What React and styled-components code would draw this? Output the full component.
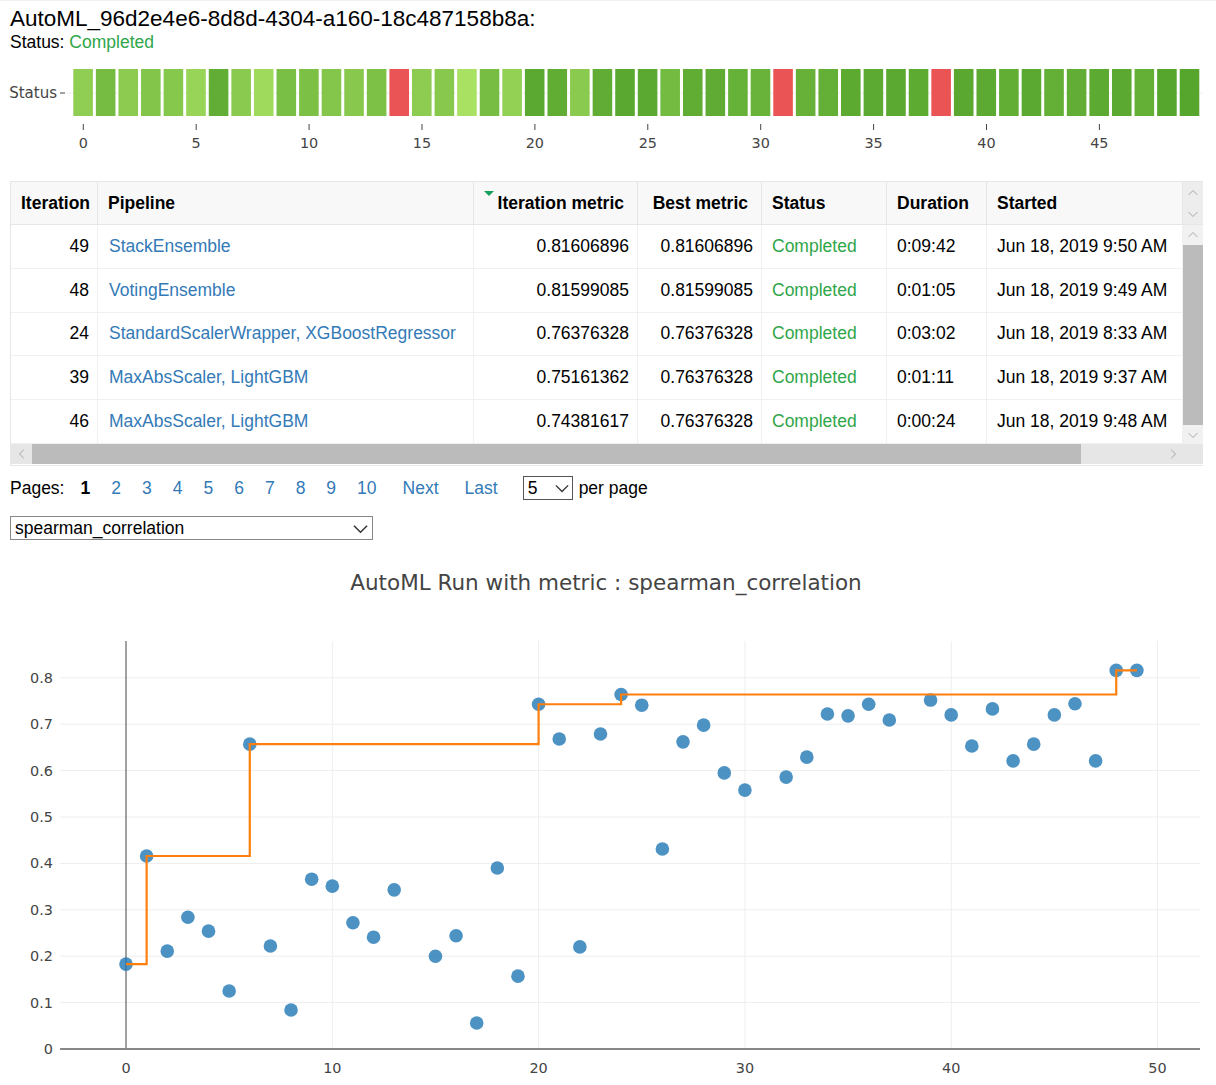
import React from "react";
import styled, { createGlobalStyle } from "styled-components";

// metric per iteration, null = failed run
const scores = [
  0.183, 0.416, 0.211, 0.284, 0.254, 0.125, 0.657, 0.222, 0.084, 0.366,
  0.351, 0.272, 0.241, 0.343, null, 0.2, 0.244, 0.056, 0.39, 0.157,
  0.743, 0.668, 0.22, 0.679, 0.764, 0.741, 0.431, 0.662, 0.698, 0.595,
  0.558, null, 0.586, 0.629, 0.722, 0.718, 0.743, 0.709, null, 0.752,
  0.72, 0.653, 0.733, 0.621, 0.657, 0.72, 0.744, 0.621, 0.816, 0.816,
];

const runs = [
  { it: 49, pipeline: "StackEnsemble", metric: "0.81606896", best: "0.81606896", duration: "0:09:42", started: "Jun 18, 2019 9:50 AM" },
  { it: 48, pipeline: "VotingEnsemble", metric: "0.81599085", best: "0.81599085", duration: "0:01:05", started: "Jun 18, 2019 9:49 AM" },
  { it: 24, pipeline: "StandardScalerWrapper, XGBoostRegressor", metric: "0.76376328", best: "0.76376328", duration: "0:03:02", started: "Jun 18, 2019 8:33 AM" },
  { it: 39, pipeline: "MaxAbsScaler, LightGBM", metric: "0.75161362", best: "0.76376328", duration: "0:01:11", started: "Jun 18, 2019 9:37 AM" },
  { it: 46, pipeline: "MaxAbsScaler, LightGBM", metric: "0.74381617", best: "0.76376328", duration: "0:00:24", started: "Jun 18, 2019 9:48 AM" },
];

const COLS = "87px 376px 164px 124px 125px 100px 196px";

/** heatmap cell colour from the metric value */
const cellColor = (v) => {
  if (v === null) return "#ea5455";
  const t = Math.pow(Math.min(1, Math.max(0, (v - 0.05) / 0.77)), 0.6);
  const mix = (a, b) => Math.round(a + (b - a) * t);
  return `rgb(${mix(174, 86)}, ${mix(228, 165)}, ${mix(102, 45)})`;
};

const STRIP_X0 = 72;
const STRIP_PITCH = (1201 - 72) / 50;

const px = (x) => 126 + x * 20.63;
const py = (v) => 509 - v * 464;

/** running best as an hv step line */
const bestPath = () => {
  let best = -Infinity;
  let d = "";
  scores.forEach((v, i) => {
    if (v === null) return;
    best = Math.max(best, v);
    if (!d) d = `M${px(i)},${py(best)}`;
    else d += ` H${px(i)} V${py(best)}`;
  });
  return d;
};

const Chevron = ({ dir = "down", size = 10, color = "#a6a6a6" }) => {
  const pts = {
    down: "0.5,2.5 4,6 7.5,2.5",
    up: "0.5,5.5 4,2 7.5,5.5",
    left: "5.5,0.5 2,4 5.5,7.5",
    right: "2.5,0.5 6,4 2.5,7.5",
  }[dir];
  return (
    <svg width={size} height={size} viewBox="0 0 8 8">
      <polyline points={pts} fill="none" stroke={color} strokeWidth="0.8" />
    </svg>
  );
};

const StatusStrip = () => (
  <StripSvg width="1216" height="125" viewBox="0 0 1216 125">
    <line x1="66" x2="1203" y1="40" y2="40" stroke="#eee" />
    {scores.map((v, i) => (
      <rect
        key={i}
        x={STRIP_X0 + i * STRIP_PITCH + 1.3}
        y="16"
        width={STRIP_PITCH - 3}
        height="47"
        fill={cellColor(v)}
      />
    ))}
    <StripLabel x="57" y="45" textAnchor="end">Status</StripLabel>
    <line x1="60" x2="65" y1="40" y2="40" stroke="#444" />
    {[0, 5, 10, 15, 20, 25, 30, 35, 40, 45].map((n) => {
      const x = STRIP_X0 + (n + 0.5) * STRIP_PITCH;
      return (
        <g key={n}>
          <line x1={x} x2={x} y1="71" y2="77" stroke="#444" />
          <text x={x} y="95" textAnchor="middle">{n}</text>
        </g>
      );
    })}
  </StripSvg>
);

const MetricChart = () => (
  <ChartSvg width="1216" height="546" viewBox="0 0 1216 546">
    <ChartTitle x="606" y="50" textAnchor="middle">
      AutoML Run with metric : spearman_correlation
    </ChartTitle>
    {[10, 20, 30, 40, 50].map((x) => (
      <line key={x} x1={px(x)} x2={px(x)} y1="101" y2="509" stroke="#eee" />
    ))}
    {[0.1, 0.2, 0.3, 0.4, 0.5, 0.6, 0.7, 0.8].map((v) => (
      <line key={v} x1="60" x2="1200" y1={py(v)} y2={py(v)} stroke="#eee" />
    ))}
    <line x1={px(0)} x2={px(0)} y1="101" y2="509" stroke="#444" />
    <line x1="60" x2="1200" y1="509" y2="509" stroke="#888" strokeWidth="2" />
    {[0, 0.1, 0.2, 0.3, 0.4, 0.5, 0.6, 0.7, 0.8].map((v) => (
      <text key={v} x="53" y={py(v) + 5} textAnchor="end">{v}</text>
    ))}
    {[0, 10, 20, 30, 40, 50].map((x) => (
      <text key={x} x={px(x)} y="533" textAnchor="middle">{x}</text>
    ))}
    {scores.map((v, i) =>
      v === null ? null : (
        <circle key={i} cx={px(i)} cy={py(v)} r="6.8" fill="#1f77b4" fillOpacity="0.8" />
      )
    )}
    <path d={bestPath()} fill="none" stroke="#ff7f0e" strokeWidth="2.2" />
  </ChartSvg>
);

const App = () => (
  <Page>
    <GlobalStyle />
    <Header>
      <RunTitle>AutoML_96d2e4e6-8d8d-4304-a160-18c487158b8a:</RunTitle>
      <RunStatus>
        Status: <Ok>Completed</Ok>
      </RunStatus>
    </Header>

    <StatusStrip />

    <TableFrame>
      <HeadRow>
        <Grid $head>
          <HeadCell>Iteration</HeadCell>
          <HeadCell>Pipeline</HeadCell>
          <HeadCell $right>
            <SortMark />
            Iteration metric
          </HeadCell>
          <HeadCell $right>Best metric</HeadCell>
          <HeadCell>Status</HeadCell>
          <HeadCell>Duration</HeadCell>
          <HeadCell>Started</HeadCell>
        </Grid>
        <HeadScroll>
          <Chevron dir="up" />
          <Chevron dir="down" />
        </HeadScroll>
      </HeadRow>

      <BodyRow>
        <Rows>
          {runs.map((r) => (
            <Grid key={r.it}>
              <Cell $right>{r.it}</Cell>
              <Cell $lead>
                <Link>{r.pipeline}</Link>
              </Cell>
              <Cell $right>{r.metric}</Cell>
              <Cell $right>{r.best}</Cell>
              <Cell>
                <Ok>Completed</Ok>
              </Cell>
              <Cell>{r.duration}</Cell>
              <Cell>{r.started}</Cell>
            </Grid>
          ))}
        </Rows>
        <VScroll>
          <ArrowBox $tall>
            <Chevron dir="up" />
          </ArrowBox>
          <VThumb />
          <ArrowBox>
            <Chevron dir="down" />
          </ArrowBox>
        </VScroll>
      </BodyRow>

      <HScroll>
        <ArrowBox $w={21}>
          <Chevron dir="left" />
        </ArrowBox>
        <HThumb />
        <HTrack />
        <ArrowBox $w={20}>
          <Chevron dir="right" />
        </ArrowBox>
        <ArrowBox $w={20} />
      </HScroll>
    </TableFrame>

    <Pager>
      <PagerLabel>Pages:</PagerLabel>
      <CurrentPage>1</CurrentPage>
      {[2, 3, 4, 5, 6, 7, 8, 9, 10].map((n) => (
        <PageLink key={n}>{n}</PageLink>
      ))}
      <PageLink $wide>Next</PageLink>
      <PageLink $wide>Last</PageLink>
      <SizeSelect>
        5
        <Chevron dir="down" size={14} color="#333" />
      </SizeSelect>
      <PerPage>per page</PerPage>
    </Pager>

    <MetricSelect>
      spearman_correlation
      <Chevron dir="down" size={15} color="#333" />
    </MetricSelect>

    <MetricChart />
  </Page>
);

const GlobalStyle = createGlobalStyle`
  * { box-sizing: border-box; }
  body {
    margin: 0;
    background: #fff;
    color: #000;
    font-family: "Liberation Sans", Arial, sans-serif;
  }
`;

const Page = styled.div`
  width: 1216px;
  border-top: 1px solid #f0f0f0;
`;

const Header = styled.header`
  padding: 5px 10px 0;
`;

const RunTitle = styled.h1`
  margin: 0;
  font-size: 22.5px;
  font-weight: normal;
  line-height: 25px;
`;

const RunStatus = styled.div`
  font-size: 17.5px;
  line-height: 22px;
`;

const Ok = styled.span`
  color: #2fa64a;
`;

const StripSvg = styled.svg`
  display: block;
  text {
    font-family: "DejaVu Sans", Verdana, sans-serif;
    font-size: 14.4px;
    fill: #444;
  }
`;

const StripLabel = styled.text`
  && {
    font-size: 15px;
  }
`;

const TableFrame = styled.div`
  margin: 3px 0 0 10px;
  width: 1193px;
  border: 1px solid #e6e6e6;
  border-right: none;
  padding-bottom: 1px;
  font-size: 17.5px;
`;

const HeadRow = styled.div`
  display: flex;
  height: 43px;
  background: #f8f8f8;
  border-bottom: 1px solid #e6e6e6;
`;

const Grid = styled.div`
  display: grid;
  grid-template-columns: ${COLS};
  height: ${({ $head }) => ($head ? "42px" : "43.8px")};
  border-bottom: ${({ $head }) => ($head ? "none" : "1px solid #f0f0f0")};
`;

const HeadCell = styled.div`
  display: flex;
  align-items: center;
  justify-content: ${({ $right }) => ($right ? "flex-end" : "flex-start")};
  padding: ${({ $right }) => ($right ? "0 13px 0 10px" : "0 10px")};
  font-weight: bold;
  white-space: nowrap;
  border-right: 1px solid #e6e6e6;
`;

const SortMark = styled.span`
  align-self: flex-start;
  margin: 9px 4px 0 0;
  border-left: 5px solid transparent;
  border-right: 5px solid transparent;
  border-top: 5px solid #17a05d;
`;

const Cell = styled.div`
  display: flex;
  align-items: center;
  justify-content: ${({ $right }) => ($right ? "flex-end" : "flex-start")};
  padding: ${({ $right, $lead }) => ($right ? "0 8px 0 10px" : $lead ? "0 10px 0 11px" : "0 10px")};
  white-space: nowrap;
  border-right: 1px solid #f0f0f0;
`;

const Link = styled.span`
  color: #337ab7;
`;

const HeadScroll = styled.div`
  width: 20px;
  display: flex;
  flex-direction: column;
  align-items: center;
  justify-content: center;
  gap: 11px;
  background: #ededed;
`;

const BodyRow = styled.div`
  display: flex;
`;

const Rows = styled.div`
  display: flex;
  flex-direction: column;
`;

const VScroll = styled.div`
  width: 20px;
  display: flex;
  flex-direction: column;
  background: #f1f1f1;
`;

const ArrowBox = styled.div`
  width: ${({ $w }) => ($w ? `${$w}px` : "20px")};
  height: ${({ $tall }) => ($tall ? "20px" : "19px")};
  flex: none;
  display: flex;
  align-items: center;
  justify-content: center;
`;

const VThumb = styled.div`
  height: 180px;
  background: #bbb;
`;

const HScroll = styled.div`
  display: flex;
  height: 20px;
  background: #e6e6e6;
  align-items: center;
`;

const HThumb = styled.div`
  width: 1049px;
  height: 20px;
  background: #bbb;
`;

const HTrack = styled.div`
  flex: 1;
`;

const Pager = styled.div`
  display: flex;
  align-items: center;
  height: 24px;
  margin: 10px 0 0 10px;
  font-size: 17.5px;
`;

const PagerLabel = styled.span`
  margin-right: 16px;
`;

const CurrentPage = styled.span`
  font-weight: bold;
`;

const PageLink = styled.span`
  color: #337ab7;
  margin-left: ${({ $wide }) => ($wide ? "26px" : "21px")};
`;

const SizeSelect = styled.div`
  display: flex;
  align-items: center;
  justify-content: space-between;
  width: 50px;
  height: 24px;
  margin-left: 25px;
  padding: 0 3px 0 4px;
  border: 1px solid #555;
`;

const PerPage = styled.span`
  margin-left: 6px;
`;

const MetricSelect = styled.div`
  display: flex;
  align-items: center;
  justify-content: space-between;
  width: 363px;
  height: 24px;
  margin: 16px 0 0 10px;
  padding: 0 4px 0 4px;
  border: 1px solid #888;
  font-size: 17.5px;
`;

const ChartSvg = styled.svg`
  display: block;
  text {
    font-family: "DejaVu Sans", Verdana, sans-serif;
    font-size: 14.4px;
    fill: #444;
  }
`;

const ChartTitle = styled.text`
  && {
    font-size: 21.5px;
  }
`;

export default App;
